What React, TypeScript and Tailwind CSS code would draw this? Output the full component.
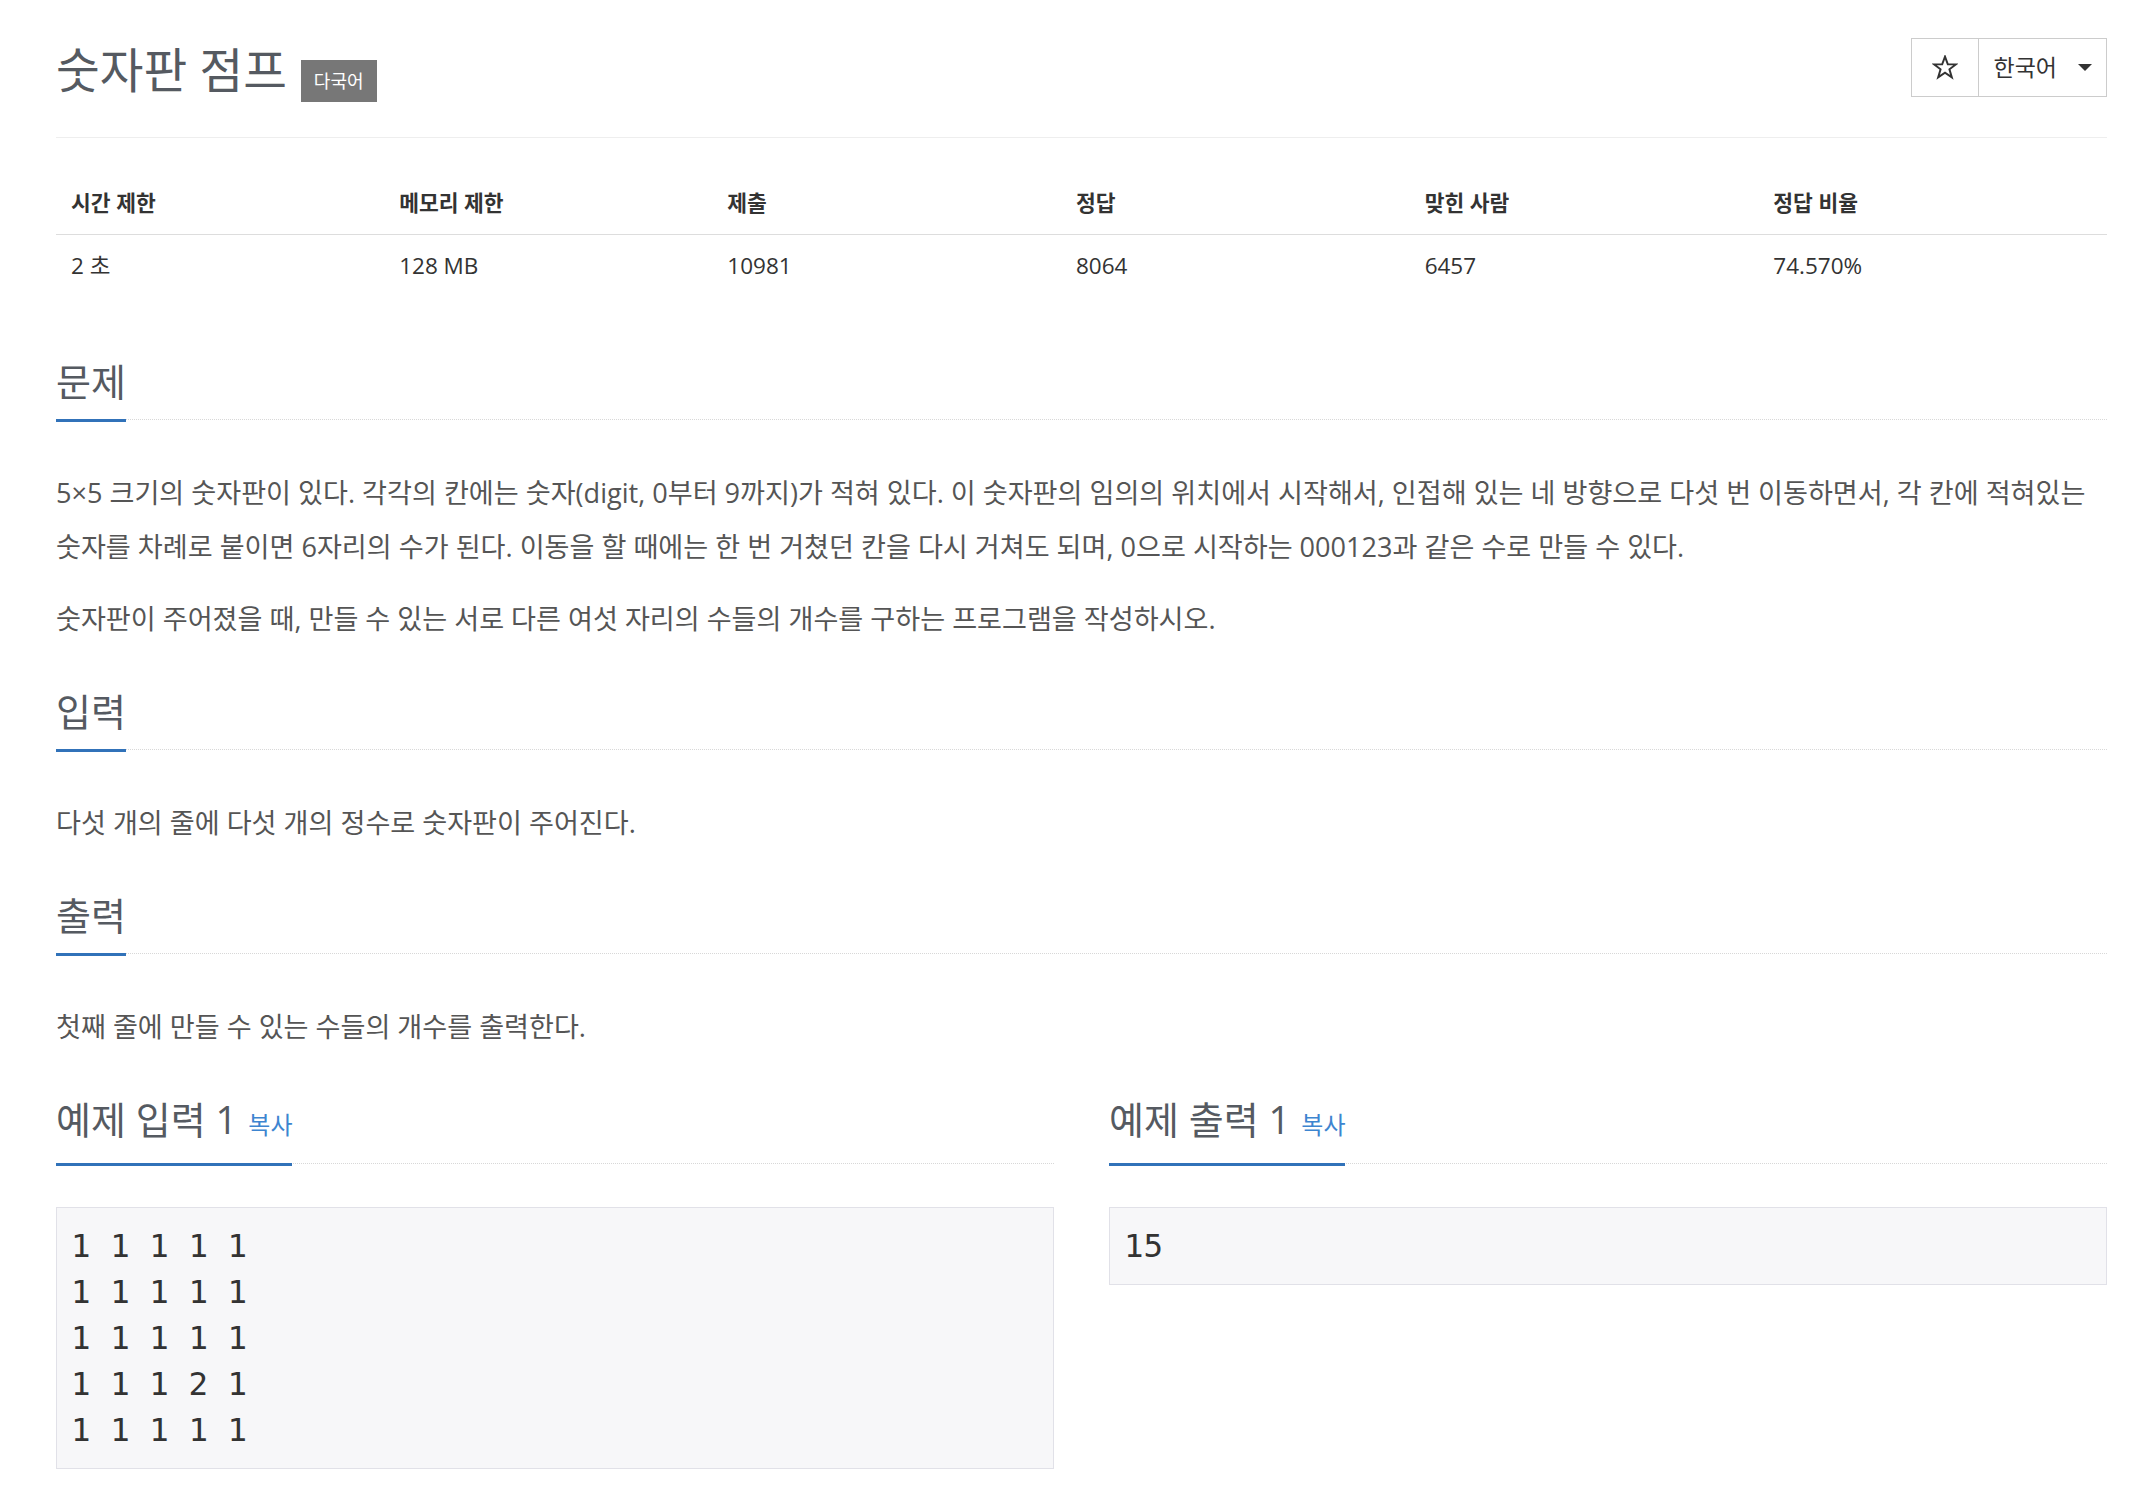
import React from 'react';

const STATS = [
  { label: '시간 제한', value: '2 초', w: 'w-[16%]' },
  { label: '메모리 제한', value: '128 MB', w: 'w-[16%]' },
  { label: '제출', value: '10981', w: 'w-[17%]' },
  { label: '정답', value: '8064', w: 'w-[17%]' },
  { label: '맞힌 사람', value: '6457', w: 'w-[17%]' },
  { label: '정답 비율', value: '74.570%', w: 'w-[17%]' },
];

const Headline: React.FC<{ title: string; copy?: boolean }> = ({ title, copy }) => (
  <div className="flex items-start border-b border-dotted border-[#d8d8d8]">
    <h2 className="-mb-[3px] flex items-baseline border-b-[3px] border-[#3172b9] pb-[17px] text-[38px] leading-[42px] font-normal text-[#555a61]">
      {title}
      {copy && <span className="ml-[11px] text-[24px] text-[#3d85d0]">복사</span>}
    </h2>
  </div>
);

const Section: React.FC<{ title: string; children: React.ReactNode }> = ({ title, children }) => (
  <section className="mb-[44px]">
    <Headline title={title} />
    <div className="mt-[46px] text-[27.1px] leading-[54px] text-[#555]">{children}</div>
  </section>
);

const App: React.FC = () => {
  return (
    <div className="min-h-screen bg-white font-['Open_Sans','Noto_Sans_CJK_KR',sans-serif]">
      <div className="ml-[56px] w-[2051px]">
        {/* Title */}
        <div className="flex items-start justify-between border-b border-[#eee] pt-[38px] pb-[35px]">
          <div className="mt-[2px] flex items-start">
            <h1 className="text-[47.5px] leading-[60px] font-normal text-[#555a61]">숫자판 점프</h1>
            <span className="ml-[14px] mt-[20px] flex h-[42px] items-center bg-[#777] px-[13px] text-[18px] text-white">
              다국어
            </span>
          </div>
          <div className="flex h-[59px] border border-[#ccc] text-[#333]">
            <button className="flex w-[67px] items-center justify-center border-r border-[#ccc]">
              <svg width="26" height="25" viewBox="0 0 24 23" fill="none" stroke="#333" strokeWidth="1.8" strokeLinejoin="miter">
                <polygon points="12,1.5 14.6,8.6 22.2,8.6 16.1,13.2 18.3,20.6 12,16.2 5.7,20.6 7.9,13.2 1.8,8.6 9.4,8.6" />
              </svg>
            </button>
            <button className="flex items-center pl-[15px] pr-[14px] text-[23px]">
              한국어
              <span className="ml-[21px] h-0 w-0 border-x-[7px] border-t-[7px] border-x-transparent border-t-[#333]" />
            </button>
          </div>
        </div>

        {/* Stats */}
        <table className="mt-[34px] mb-[63px] w-full table-fixed border-collapse text-[#333]">
          <thead>
            <tr>
              {STATS.map((s) => (
                <th key={s.label} className={`${s.w} border-b border-[#ddd] px-[15px] py-[13px] text-left text-[21.5px] font-bold leading-[36px]`}>
                  {s.label}
                </th>
              ))}
            </tr>
          </thead>
          <tbody>
            <tr>
              {STATS.map((s) => (
                <td key={s.label} className="px-[15px] py-[13px] text-[22.5px] leading-[36px]">
                  {s.value}
                </td>
              ))}
            </tr>
          </tbody>
        </table>

        <Section title="문제">
          <p className="mb-[18px]">
            5×5 크기의 숫자판이 있다. 각각의 칸에는 숫자(digit, 0부터 9까지)가 적혀 있다. 이 숫자판의 임의의 위치에서 시작해서, 인접해 있는 네 방향으로 다섯 번 이동하면서, 각 칸에 적혀있는 숫자를 차례로 붙이면 6자리의 수가 된다. 이동을 할 때에는 한 번 거쳤던 칸을 다시 거쳐도 되며, 0으로 시작하는 000123과 같은 수로 만들 수 있다.
          </p>
          <p className="mb-[18px]">숫자판이 주어졌을 때, 만들 수 있는 서로 다른 여섯 자리의 수들의 개수를 구하는 프로그램을 작성하시오.</p>
        </Section>

        <Section title="입력">
          <p className="mb-[18px]">다섯 개의 줄에 다섯 개의 정수로 숫자판이 주어진다.</p>
        </Section>

        <Section title="출력">
          <p className="mb-[18px]">첫째 줄에 만들 수 있는 수들의 개수를 출력한다.</p>
        </Section>

        {/* Samples */}
        <div className="grid grid-cols-2 gap-x-[55px]">
          <div>
            <Headline title="예제 입력 1" copy />
            <pre className="mt-[43px] border border-[#e1e1e8] bg-[#f7f7f9] px-[14px] py-[15px] font-['DejaVu_Sans_Mono',monospace] text-[32.5px] leading-[46px] text-[#333]">
              {'1 1 1 1 1\n1 1 1 1 1\n1 1 1 1 1\n1 1 1 2 1\n1 1 1 1 1'}
            </pre>
          </div>
          <div>
            <Headline title="예제 출력 1" copy />
            <pre className="mt-[43px] border border-[#e1e1e8] bg-[#f7f7f9] px-[14px] py-[15px] font-['DejaVu_Sans_Mono',monospace] text-[32.5px] leading-[46px] text-[#333]">
              {'15'}
            </pre>
          </div>
        </div>
      </div>
    </div>
  );
};

export default App;
